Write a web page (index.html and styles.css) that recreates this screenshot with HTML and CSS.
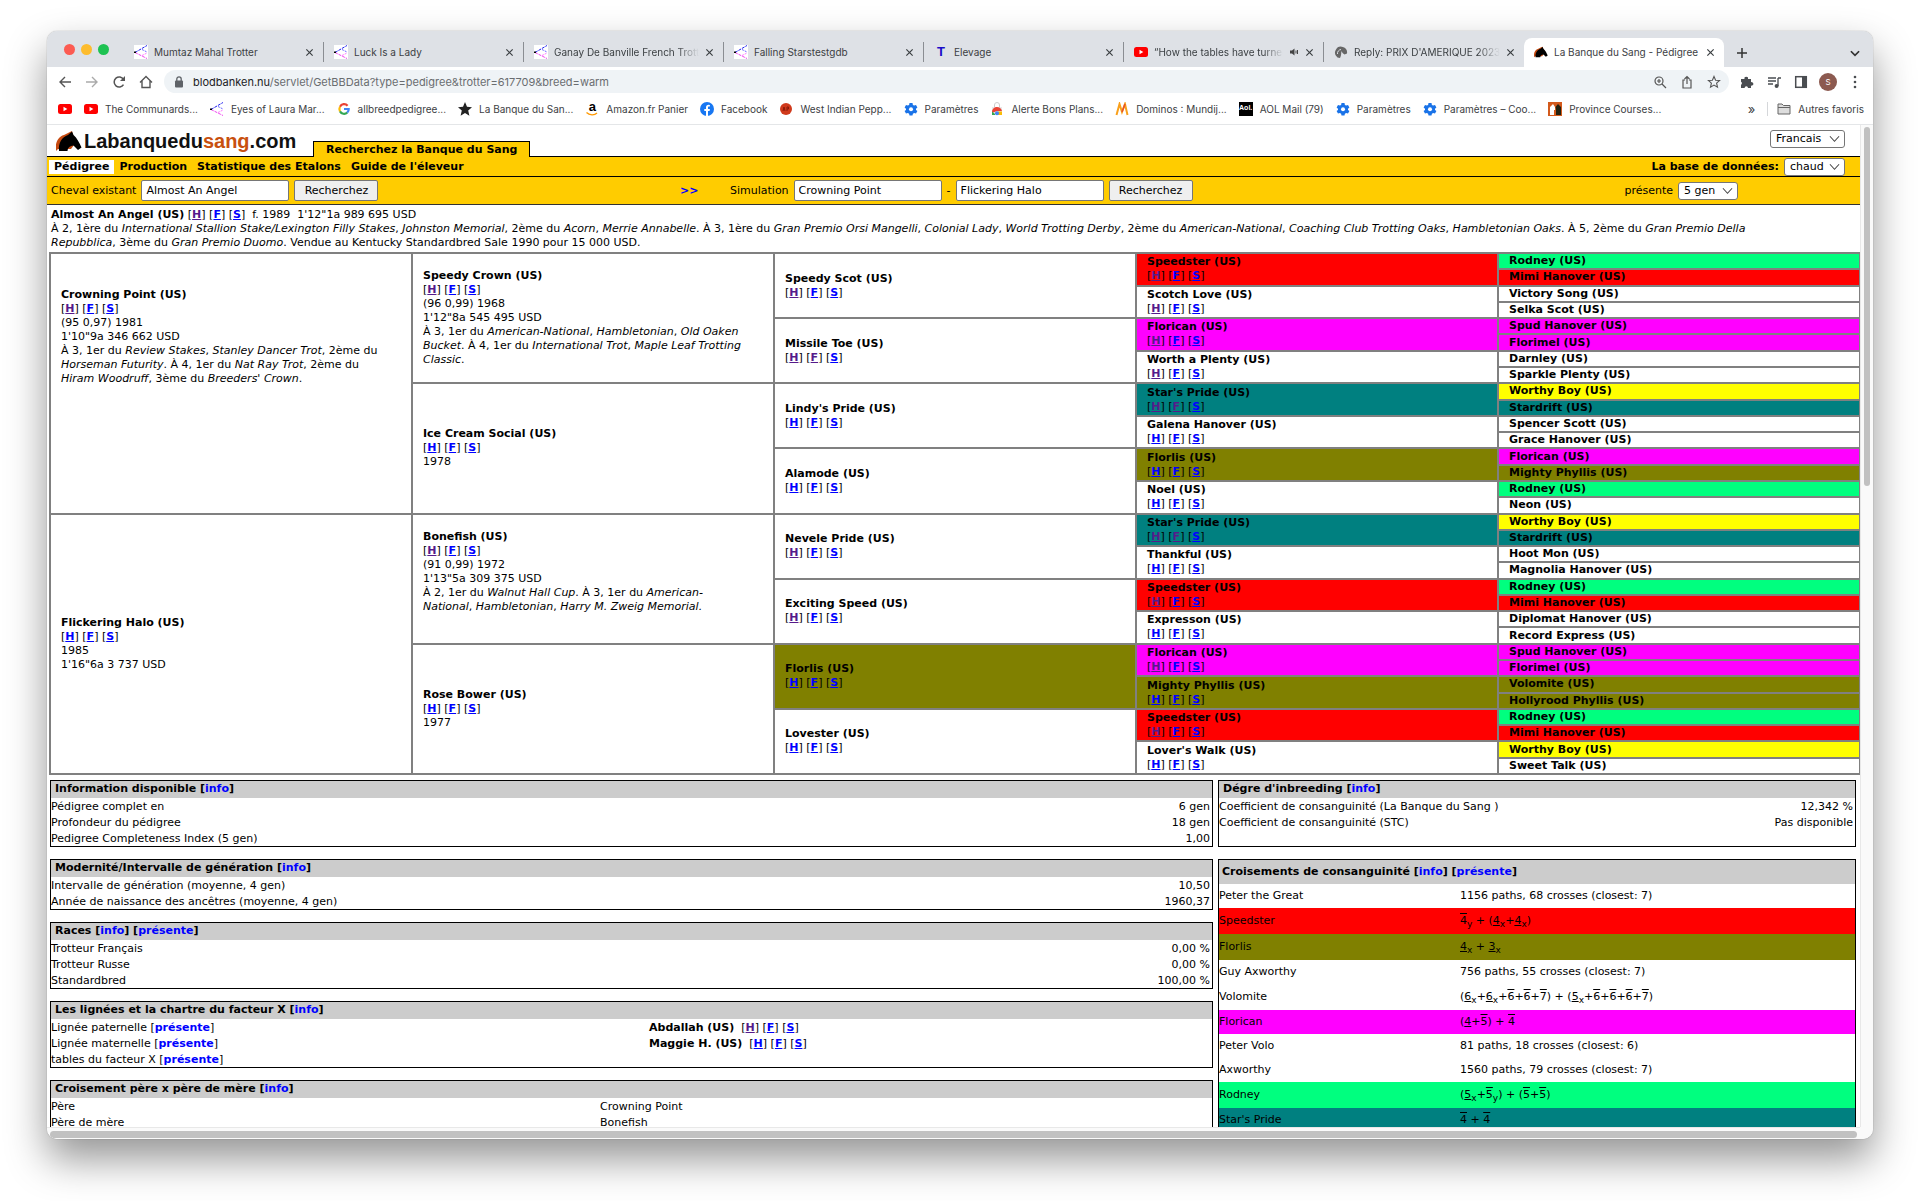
FILE: index.html
```html
<!DOCTYPE html>
<html lang="fr">
<head>
<meta charset="utf-8">
<title>La Banque du Sang - Pédigree</title>
<link rel="stylesheet" href="styles.css">
</head>
<body>
<svg class="symbols" aria-hidden="true">
  <symbol id="close" viewBox="0 0 10 10"><path d="M1.5 1.5l7 7M8.5 1.5l-7 7" stroke="#3c4043" stroke-width="1.3" fill="none"/></symbol>
  <symbol id="tree" viewBox="0 0 14 14"><path d="M1 7.500L13 .5" stroke="#22e" fill="none" stroke-dasharray="3 1"/><path d="M1 7.500l12 6" stroke="#e4e" fill="none" stroke-dasharray="3 1"/><path d="M8 4.500l5 2.500" stroke="#66f" fill="none" stroke-dasharray="2 1"/><path d="M8 10.500l5-2.500" stroke="#f7f" fill="none" stroke-dasharray="2 1"/><path d="M0 6.500h2v1.500H0z" fill="#000"/></symbol>
  <symbol id="youtube" viewBox="0 0 14 14"><rect y="2" width="14" height="10" rx="2.500" fill="#f00"/><path d="M5.500 4.800v4.400L9.300 7z" fill="#fff"/></symbol>
  <symbol id="horse" viewBox="0 0 26 20"><path d="M0 20C-1 13 1 6 8 4L16 0l1 4 4 6-6 8H2z" fill="#c64a10"/><path d="M3 20C2 12 6 6 12 4l4-3.500L17.500 4C21 7 23.500 12 25.500 16.500L22 19l-4.500-4.500C14 15 12 16 11.500 20z" fill="#000"/></symbol>
  <symbol id="gear" viewBox="0 0 14 14"><path d="M5.500 1h3l.4 1.900 1.200.7 1.900-.7 1.400 2.500-1.400 1.300v1.200l1.400 1.200-1.400 2.500-1.900-.6-1.200.7-.4 1.800h-3l-.4-1.800-1.200-.7-1.900.6-1.400-2.500L2 7.900V6.700L.6 5.400 2 2.900l1.900.7 1.200-.7z" fill="#1a73e8"/><circle cx="7" cy="7.300" r="2" fill="#fff"/></symbol>
  <symbol id="chevron" viewBox="0 0 12 8"><path d="M1 1l5 5.500L11 1" stroke="#444" stroke-width="1.100" fill="none"/></symbol>
</svg>

<div class="window">
  <div class="tabstrip">
    <div class="lights"><i class="light light-red"></i><i class="light light-amber"></i><i class="light light-green"></i></div>
    <div class="tabs">
      <div class="tab"><svg class="ico white"><use href="#tree"/></svg><span class="tab-name">Mumtaz Mahal Trotter</span><svg class="x"><use href="#close"/></svg></div>
      <div class="tab"><svg class="ico white"><use href="#tree"/></svg><span class="tab-name">Luck Is a Lady</span><svg class="x"><use href="#close"/></svg></div>
      <div class="tab"><svg class="ico white"><use href="#tree"/></svg><span class="tab-name fade">Ganay De Banville French Trotter</span><svg class="x"><use href="#close"/></svg></div>
      <div class="tab"><svg class="ico white"><use href="#tree"/></svg><span class="tab-name">Falling Starstestgdb</span><svg class="x"><use href="#close"/></svg></div>
      <div class="tab"><b class="ico letter">T</b><span class="tab-name">Elevage</span><svg class="x"><use href="#close"/></svg></div>
      <div class="tab"><svg class="ico"><use href="#youtube"/></svg><span class="tab-name fade">“How the tables have turned”</span><svg class="speaker" viewBox="0 0 10 10"><path d="M1 3.500h2L5.500 1.500v7L3 6.500H1z" fill="#444"/><path d="M7 3.500v3M8.500 3v4" stroke="#444" fill="none"/></svg><svg class="x"><use href="#close"/></svg></div>
      <div class="tab last"><svg class="ico" viewBox="0 0 14 14"><path d="M3.500 12.500A6 6 0 1 1 13 8.500l-2.500 1C9 8.500 8 7.500 7.500 6c-.5 2 0 4-1.500 7z" fill="#666"/><path d="M3.500 9A4 4 0 0 1 7 4.500" stroke="#dee1e6" fill="none"/></svg><span class="tab-name fade">Reply: PRIX D'AMERIQUE 2023</span><svg class="x"><use href="#close"/></svg></div>
      <div class="tab active"><svg class="ico" viewBox="0 0 26 20"><use href="#horse"/></svg><span class="tab-name">La Banque du Sang - Pédigree</span><svg class="x"><use href="#close"/></svg></div>
      <button class="icon-btn new-tab" aria-label="Nouvel onglet"><svg viewBox="0 0 12 12"><path d="M6 1v10M1 6h10" stroke="#333" stroke-width="1.500"/></svg></button>
    </div>
    <button class="icon-btn tab-list" aria-label="Onglets"><svg viewBox="0 0 12 12"><path d="M2.500 4.500L6 8l3.500-3.500" stroke="#333" stroke-width="1.500" fill="none"/></svg></button>
  </div>

  <div class="toolbar">
    <button class="icon-btn" aria-label="Retour"><svg viewBox="0 0 14 14"><path d="M13 7H2M7 2L2 7l5 5" stroke="#555" stroke-width="1.400" fill="none"/></svg></button>
    <button class="icon-btn" aria-label="Suivant"><svg viewBox="0 0 14 14"><path d="M1 7h11M7 2l5 5-5 5" stroke="#aaa" stroke-width="1.400" fill="none"/></svg></button>
    <button class="icon-btn" aria-label="Actualiser"><svg viewBox="0 0 14 14"><path d="M11.500 9.500a5 5 0 1 1 0-5" stroke="#555" stroke-width="1.500" fill="none"/><path d="M13 1v5H8z" fill="#555"/></svg></button>
    <button class="icon-btn" aria-label="Accueil"><svg viewBox="0 0 14 14"><path d="M1 7.500L7 1.500l6 6M3 6v6.500h8V6" stroke="#555" stroke-width="1.400" fill="none"/></svg></button>
    <div class="address">
      <svg class="lock" viewBox="0 0 14 14"><rect x="3" y="5.500" width="8" height="7" rx="1" fill="#5f6368"/><path d="M4.800 6V4a2.200 2.200 0 0 1 4.400 0v2" stroke="#5f6368" stroke-width="1.300" fill="none"/></svg>
      <span class="url"><b>blodbanken.nu</b>/servlet/GetBBData?type=pedigree&amp;trotter=617709&amp;breed=warm</span>
      <button class="icon-btn" aria-label="Zoom"><svg viewBox="0 0 14 14"><circle cx="6" cy="6" r="4" stroke="#555" stroke-width="1.200" fill="none"/><path d="M9 9l4 4M6 4v4M4 6h4" stroke="#555" stroke-width="1.200"/></svg></button>
      <button class="icon-btn" aria-label="Partager"><svg viewBox="0 0 14 14"><path d="M5 5H3v8h8V5H9M7 9V1.500M4.500 4L7 1.500 9.500 4" stroke="#555" stroke-width="1.200" fill="none"/></svg></button>
      <button class="icon-btn" aria-label="Favori"><svg viewBox="0 0 14 14"><path d="M7 1.500l1.600 3.700 4 .3-3 2.700.9 4L7 10.100l-3.500 2.100.9-4-3-2.700 4-.3z" stroke="#555" stroke-width="1.100" fill="none"/></svg></button>
    </div>
    <div class="tools">
      <button class="icon-btn" aria-label="Extensions"><svg viewBox="0 0 14 14"><path d="M1 4h3.500a1.800 1.800 0 1 1 3.500 0h3v3.200a1.800 1.800 0 1 1 0 3.400V13H8a1.700 1.700 0 0 0-3.400 0H1V9.700a1.700 1.700 0 0 0 0-3z" fill="#4a4d51"/></svg></button>
      <button class="icon-btn" aria-label="Médias"><svg viewBox="0 0 14 14"><path d="M1 3h8M1 6h8M1 9h5M11 3v8M11 3h3" stroke="#4a4d51" stroke-width="1.300"/><circle cx="9.600" cy="11" r="2" fill="#4a4d51"/></svg></button>
      <button class="icon-btn" aria-label="Panneau"><svg viewBox="0 0 14 14"><rect x="1.700" y="1.700" width="10.600" height="10.600" stroke="#4a4d51" stroke-width="1.500" fill="none"/><path d="M8 1h5v12H8z" fill="#4a4d51"/></svg></button>
      <button class="icon-btn avatar" aria-label="Profil">S</button>
      <button class="icon-btn" aria-label="Menu"><svg viewBox="0 0 14 14"><circle cx="7" cy="2" r="1.300" fill="#4a4d51"/><circle cx="7" cy="7" r="1.300" fill="#4a4d51"/><circle cx="7" cy="12" r="1.300" fill="#4a4d51"/></svg></button>
    </div>
  </div>

  <nav class="bookmarks">
    <a href="#"><svg class="ico"><use href="#youtube"/></svg></a>
    <a href="#"><svg class="ico"><use href="#youtube"/></svg>The Communards...</a>
    <a href="#"><svg class="ico"><use href="#tree"/></svg>Eyes of Laura Mar...</a>
    <a href="#"><svg class="ico" viewBox="0 0 14 14"><g fill="none" stroke-width="2.200"><path d="M10.600 3.700A4.600 4.600 0 0 0 3 4.700" stroke="#ea4335"/><path d="M3 4.700a4.800 4.800 0 0 0 0 4.700" stroke="#fbbc05"/><path d="M3 9.400a4.700 4.700 0 0 0 7.200 1.200" stroke="#34a853"/><path d="M10.200 10.600A4.500 4.500 0 0 0 11.700 7H7" stroke="#4285f4"/></g></svg>allbreedpedigree...</a>
    <a href="#"><svg class="ico" viewBox="0 0 14 14"><path d="M7 0l2 4.800 5 .4-3.800 3.400 1.200 5.200L7 11l-4.400 2.800 1.200-5.200L0 5.200l5-.4z" fill="#222"/></svg>La Banque du San...</a>
    <a href="#"><span class="ico amazon"><b>a</b><svg viewBox="0 0 14 4"><path d="M1.500 .5c3 3 8 3 10.500 .5" stroke="#f90" stroke-width="1.300" fill="none"/></svg></span>Amazon.fr Panier</a>
    <a href="#"><svg class="ico" viewBox="0 0 14 14"><circle cx="7" cy="7" r="7" fill="#1877f2"/><path d="M6 14V9H4.300V7H6V5.500C6 3.700 7 2.800 8.600 2.800l1.300.1v1.700H9c-.8 0-1 .4-1 1V7h1.900l-.3 2H8v5z" fill="#fff"/></svg>Facebook</a>
    <a href="#"><svg class="ico" viewBox="0 0 14 14"><circle cx="7" cy="7" r="6" fill="#d03a1c"/><path d="M4 9l1-4 1 4M8 9V5h1.500v2H8" stroke="#8a1a0a" fill="none"/></svg>West Indian Pepp...</a>
    <a href="#"><svg class="ico"><use href="#gear"/></svg>Paramètres</a>
    <a href="#"><svg class="ico" viewBox="0 0 14 14"><path d="M2 5h10v8H2z" fill="#e8e8e8"/><path d="M4.500 5V3a2.500 2.500 0 0 1 5 0v2" stroke="#ccc" fill="none"/><path d="M2 11a5 5 0 0 1 10-2H7z" fill="#ea4335"/><path d="M2 13V9.500L5 12v1z" fill="#34a853"/><path d="M12 13V9.500H8V13z" fill="#fbbc05"/><circle cx="7" cy="11.300" r="2" fill="#4285f4"/></svg>Alerte Bons Plans...</a>
    <a href="#"><svg class="ico" viewBox="0 0 14 14"><path d="M1.500 13L4.500 2 7 10l3-8 2.500 11" stroke="#f9a01b" stroke-width="2" fill="none"/><path d="M7 10l3-8" stroke="#e8502a" stroke-width="1.600"/></svg>Dominos : Mundij...</a>
    <a href="#"><span class="ico aol">Aol.</span>AOL Mail (79)</a>
    <a href="#"><svg class="ico"><use href="#gear"/></svg>Paramètres</a>
    <a href="#"><svg class="ico"><use href="#gear"/></svg>Paramètres – Coo...</a>
    <a href="#"><svg class="ico" viewBox="0 0 14 14"><path d="M0 0h14v14H0z" fill="#d35a1c"/><path d="M2 13V5l3-3 2 3v3H6v5z" fill="#fff"/><path d="M8 13V7L7.500 5 10 2l3 3v8z" fill="#221"/></svg>Province Courses...</a>
    <span class="more">»</span>
    <a href="#" class="others"><svg class="ico" viewBox="0 0 14 14"><path d="M1 2h4l1.500 1.500H13V12H1z" fill="#ddd" stroke="#666"/><path d="M1 5.500h12" stroke="#666"/></svg>Autres favoris</a>
  </nav>

  <div class="viewport">
    <div class="page">
      <header class="site-head">
        <a class="logo" href="#"><svg class="logo-horse" viewBox="0 0 26 20"><use href="#horse"/></svg><span>Labanquedu<em>sang</em>.com</span></a>
        <span class="site-tab">Recherchez la Banque du Sang</span>
        <span class="select lang"><select aria-label="Langue"><option>Francais</option></select><svg><use href="#chevron"/></svg></span>
      </header>
      <nav class="site-nav">
        <a class="current" href="#">Pédigree</a><a href="#">Production</a><a href="#">Statistique des Etalons</a><a href="#">Guide de l'éleveur</a>
        <label class="db" for="db">La base de données:</label>
        <span class="select db-select"><select id="db"><option>chaud</option></select><svg><use href="#chevron"/></svg></span>
      </nav>
      <form class="search">
        <div class="group existing"><label for="horse-name">Cheval existant</label><input id="horse-name" type="text" value="Almost An Angel"><button type="button">Recherchez</button></div>
        <a class="swap" href="#">&gt;&gt;</a>
        <div class="group"><label for="sire">Simulation</label><input id="sire" type="text" value="Crowning Point"><span>-</span><input type="text" aria-label="Mère" value="Flickering Halo"><button type="button">Recherchez</button></div>
        <div class="group gens"><label for="gens">présente</label><span class="select gen-select"><select id="gens"><option>5 gen</option></select><svg><use href="#chevron"/></svg></span></div>
      </form>

      <section class="intro">
        <p><b>Almost An Angel (US)</b> <span class="hfs">[<a class="seen" href="#">H</a>] [<a href="#">F</a>] [<a href="#">S</a>]</span>&nbsp; f. 1989 &nbsp;1'12"1a 989 695 USD</p>
        <p>À 2, 1ère du <i>International Stallion Stake/Lexington Filly Stakes</i>, <i>Johnston Memorial</i>, 2ème du <i>Acorn</i>, <i>Merrie Annabelle</i>. À 3, 1ère du <i>Gran Premio Orsi Mangelli</i>, <i>Colonial Lady</i>, <i>World Trotting Derby</i>, 2ème du <i>American-National</i>, <i>Coaching Club Trotting Oaks</i>, <i>Hambletonian Oaks</i>. À 5, 2ème du <i>Gran Premio Della Repubblica</i>, 3ème du <i>Gran Premio Duomo</i>. Vendue au Kentucky Standardbred Sale 1990 pour 15 000 USD.</p>
      </section>

      <table class="pedigree">
        <tr>
          <td rowspan="16" class="sire"><b>Crowning Point (US)</b><span class="hfs">[<a class="seen" href="#">H</a>] [<a href="#">F</a>] [<a href="#">S</a>]</span>(95 0,97) 1981<br>1'10"9a 346 662 USD<br>À 3, 1er du <i>Review Stakes</i>, <i>Stanley Dancer Trot</i>, 2ème du <i>Horseman Futurity</i>. À 4, 1er du <i>Nat Ray Trot</i>, 2ème du <i>Hiram Woodruff</i>, 3ème du <i>Breeders' Crown</i>.</td>
          <td rowspan="8"><b>Speedy Crown (US)</b><span class="hfs">[<a class="seen" href="#">H</a>] [<a href="#">F</a>] [<a href="#">S</a>]</span>(96 0,99) 1968<br>1'12"8a 545 495 USD<br>À 3, 1er du <i>American-National</i>, <i>Hambletonian</i>, <i>Old Oaken Bucket</i>. À 4, 1er du <i>International Trot</i>, <i>Maple Leaf Trotting Classic</i>.</td>
          <td rowspan="4"><b>Speedy Scot (US)</b><span class="hfs">[<a class="seen" href="#">H</a>] [<a href="#">F</a>] [<a href="#">S</a>]</span></td>
          <td rowspan="2" class="red"><b>Speedster (US)</b><span class="hfs">[<a class="seen" href="#">H</a>] [<a href="#">F</a>] [<a href="#">S</a>]</span></td>
          <td class="green"><b>Rodney (US)</b></td>
        </tr>
        <tr><td class="red"><b>Mimi Hanover (US)</b></td></tr>
        <tr><td rowspan="2"><b>Scotch Love (US)</b><span class="hfs">[<a class="seen" href="#">H</a>] [<a href="#">F</a>] [<a href="#">S</a>]</span></td><td><b>Victory Song (US)</b></td></tr>
        <tr><td><b>Selka Scot (US)</b></td></tr>
        <tr><td rowspan="4"><b>Missile Toe (US)</b><span class="hfs">[<a class="seen" href="#">H</a>] [<a class="seen" href="#">F</a>] [<a href="#">S</a>]</span></td><td rowspan="2" class="magenta"><b>Florican (US)</b><span class="hfs">[<a class="seen" href="#">H</a>] [<a href="#">F</a>] [<a href="#">S</a>]</span></td><td class="magenta"><b>Spud Hanover (US)</b></td></tr>
        <tr><td class="magenta"><b>Florimel (US)</b></td></tr>
        <tr><td rowspan="2"><b>Worth a Plenty (US)</b><span class="hfs">[<a class="seen" href="#">H</a>] [<a href="#">F</a>] [<a href="#">S</a>]</span></td><td><b>Darnley (US)</b></td></tr>
        <tr><td><b>Sparkle Plenty (US)</b></td></tr>
        <tr><td rowspan="8"><b>Ice Cream Social (US)</b><span class="hfs">[<a href="#">H</a>] [<a href="#">F</a>] [<a href="#">S</a>]</span>1978</td><td rowspan="4"><b>Lindy's Pride (US)</b><span class="hfs">[<a href="#">H</a>] [<a href="#">F</a>] [<a href="#">S</a>]</span></td><td rowspan="2" class="teal"><b>Star's Pride (US)</b><span class="hfs">[<a class="seen" href="#">H</a>] [<a class="seen" href="#">F</a>] [<a href="#">S</a>]</span></td><td class="yellow"><b>Worthy Boy (US)</b></td></tr>
        <tr><td class="teal"><b>Stardrift (US)</b></td></tr>
        <tr><td rowspan="2"><b>Galena Hanover (US)</b><span class="hfs">[<a href="#">H</a>] [<a href="#">F</a>] [<a href="#">S</a>]</span></td><td><b>Spencer Scott (US)</b></td></tr>
        <tr><td><b>Grace Hanover (US)</b></td></tr>
        <tr><td rowspan="4"><b>Alamode (US)</b><span class="hfs">[<a href="#">H</a>] [<a href="#">F</a>] [<a href="#">S</a>]</span></td><td rowspan="2" class="olive"><b>Florlis (US)</b><span class="hfs">[<a href="#">H</a>] [<a href="#">F</a>] [<a href="#">S</a>]</span></td><td class="magenta"><b>Florican (US)</b></td></tr>
        <tr><td class="olive"><b>Mighty Phyllis (US)</b></td></tr>
        <tr><td rowspan="2"><b>Noel (US)</b><span class="hfs">[<a href="#">H</a>] [<a href="#">F</a>] [<a href="#">S</a>]</span></td><td class="green"><b>Rodney (US)</b></td></tr>
        <tr><td><b>Neon (US)</b></td></tr>
        <tr>
          <td rowspan="16"><b>Flickering Halo (US)</b><span class="hfs">[<a href="#">H</a>] [<a href="#">F</a>] [<a href="#">S</a>]</span>1985<br>1'16"6a 3 737 USD</td>
          <td rowspan="8"><b>Bonefish (US)</b><span class="hfs">[<a class="seen" href="#">H</a>] [<a href="#">F</a>] [<a href="#">S</a>]</span>(91 0,99) 1972<br>1'13"5a 309 375 USD<br>À 2, 1er du <i>Walnut Hall Cup</i>. À 3, 1er du <i>American-<br>National</i>, <i>Hambletonian</i>, <i>Harry M. Zweig Memorial.</i><br>&nbsp;</td>
          <td rowspan="4"><b>Nevele Pride (US)</b><span class="hfs">[<a class="seen" href="#">H</a>] [<a href="#">F</a>] [<a href="#">S</a>]</span></td>
          <td rowspan="2" class="teal"><b>Star's Pride (US)</b><span class="hfs">[<a class="seen" href="#">H</a>] [<a class="seen" href="#">F</a>] [<a href="#">S</a>]</span></td>
          <td class="yellow"><b>Worthy Boy (US)</b></td>
        </tr>
        <tr><td class="teal"><b>Stardrift (US)</b></td></tr>
        <tr><td rowspan="2"><b>Thankful (US)</b><span class="hfs">[<a href="#">H</a>] [<a href="#">F</a>] [<a href="#">S</a>]</span></td><td><b>Hoot Mon (US)</b></td></tr>
        <tr><td><b>Magnolia Hanover (US)</b></td></tr>
        <tr><td rowspan="4"><b>Exciting Speed (US)</b><span class="hfs">[<a class="seen" href="#">H</a>] [<a href="#">F</a>] [<a href="#">S</a>]</span></td><td rowspan="2" class="red"><b>Speedster (US)</b><span class="hfs">[<a class="seen" href="#">H</a>] [<a href="#">F</a>] [<a href="#">S</a>]</span></td><td class="green"><b>Rodney (US)</b></td></tr>
        <tr><td class="red"><b>Mimi Hanover (US)</b></td></tr>
        <tr><td rowspan="2"><b>Expresson (US)</b><span class="hfs">[<a href="#">H</a>] [<a href="#">F</a>] [<a href="#">S</a>]</span></td><td><b>Diplomat Hanover (US)</b></td></tr>
        <tr><td><b>Record Express (US)</b></td></tr>
        <tr><td rowspan="8"><b>Rose Bower (US)</b><span class="hfs">[<a href="#">H</a>] [<a href="#">F</a>] [<a href="#">S</a>]</span>1977</td><td rowspan="4" class="olive"><b>Florlis (US)</b><span class="hfs">[<a href="#">H</a>] [<a href="#">F</a>] [<a href="#">S</a>]</span></td><td rowspan="2" class="magenta"><b>Florican (US)</b><span class="hfs">[<a class="seen" href="#">H</a>] [<a href="#">F</a>] [<a href="#">S</a>]</span></td><td class="magenta"><b>Spud Hanover (US)</b></td></tr>
        <tr><td class="magenta"><b>Florimel (US)</b></td></tr>
        <tr><td rowspan="2" class="olive"><b>Mighty Phyllis (US)</b><span class="hfs">[<a href="#">H</a>] [<a href="#">F</a>] [<a href="#">S</a>]</span></td><td class="olive"><b>Volomite (US)</b></td></tr>
        <tr><td class="olive"><b>Hollyrood Phyllis (US)</b></td></tr>
        <tr><td rowspan="4"><b>Lovester (US)</b><span class="hfs">[<a href="#">H</a>] [<a href="#">F</a>] [<a href="#">S</a>]</span></td><td rowspan="2" class="red"><b>Speedster (US)</b><span class="hfs">[<a class="seen" href="#">H</a>] [<a href="#">F</a>] [<a href="#">S</a>]</span></td><td class="green"><b>Rodney (US)</b></td></tr>
        <tr><td class="red"><b>Mimi Hanover (US)</b></td></tr>
        <tr><td rowspan="2"><b>Lover's Walk (US)</b><span class="hfs">[<a href="#">H</a>] [<a href="#">F</a>] [<a href="#">S</a>]</span></td><td class="yellow"><b>Worthy Boy (US)</b></td></tr>
        <tr><td><b>Sweet Talk (US)</b></td></tr>
      </table>

      <div class="panels">
        <div class="col">
          <section class="box">
            <h2>Information disponible [<a href="#">info</a>]</h2>
            <table>
              <tr><td>Pédigree complet en</td><td class="num">6 gen</td></tr>
              <tr><td>Profondeur du pédigree</td><td class="num">18 gen</td></tr>
              <tr><td>Pedigree Completeness Index (5 gen)</td><td class="num">1,00</td></tr>
            </table>
          </section>
          <section class="box">
            <h2>Modernité/Intervalle de génération [<a href="#">info</a>]</h2>
            <table>
              <tr><td>Intervalle de génération (moyenne, 4 gen)</td><td class="num">10,50</td></tr>
              <tr><td>Année de naissance des ancêtres (moyenne, 4 gen)</td><td class="num">1960,37</td></tr>
            </table>
          </section>
          <section class="box">
            <h2>Races [<a href="#">info</a>] [<a href="#">présente</a>]</h2>
            <table>
              <tr><td>Trotteur Français</td><td class="num">0,00 %</td></tr>
              <tr><td>Trotteur Russe</td><td class="num">0,00 %</td></tr>
              <tr><td>Standardbred</td><td class="num">100,00 %</td></tr>
            </table>
          </section>
          <section class="box">
            <h2>Les lignées et la chartre du facteur X [<a href="#">info</a>]</h2>
            <table class="lines">
              <tr><td>Lignée paternelle [<a href="#">présente</a>]</td><td><b>Abdallah (US)</b>&nbsp; <span class="hfs">[<a class="seen" href="#">H</a>] [<a href="#">F</a>] [<a href="#">S</a>]</span></td></tr>
              <tr><td>Lignée maternelle [<a href="#">présente</a>]</td><td><b>Maggie H. (US)</b>&nbsp; <span class="hfs">[<a href="#">H</a>] [<a href="#">F</a>] [<a href="#">S</a>]</span></td></tr>
              <tr><td>tables du facteur X [<a href="#">présente</a>]</td><td></td></tr>
            </table>
          </section>
          <section class="box">
            <h2>Croisement père x père de mère [<a href="#">info</a>]</h2>
            <table class="cross">
              <tr><td>Père</td><td>Crowning Point</td></tr>
              <tr><td>Père de mère</td><td>Bonefish</td></tr>
              <tr><td></td><td></td></tr>
            </table>
          </section>
        </div>
        <div class="col side">
          <section class="box degree">
            <h2>Dégre d'inbreeding [<a href="#">info</a>]</h2>
            <table>
              <tr><td>Coefficient de consanguinité (La Banque du Sang )</td><td class="num">12,342 %</td></tr>
              <tr><td>Coefficient de consanguinité (STC)</td><td class="num">Pas disponible</td></tr>
            </table>
          </section>
          <section class="box inbreeding">
            <h2>Croisements de consanguinité [<a href="#">info</a>] [<a href="#">présente</a>]</h2>
            <table>
              <tr><td>Peter the Great</td><td>1156 paths, 68 crosses (closest: 7)</td></tr>
              <tr class="tall red"><td>Speedster</td><td><s>4</s><sub>y</sub> + (<u>4</u><sub>x</sub>+<u>4</u><sub>x</sub>)</td></tr>
              <tr class="tall olive"><td>Florlis</td><td><u>4</u><sub>x</sub> + <u>3</u><sub>x</sub></td></tr>
              <tr><td>Guy Axworthy</td><td>756 paths, 55 crosses (closest: 7)</td></tr>
              <tr class="tall"><td>Volomite</td><td>(<u>6</u><sub>x</sub>+<u>6</u><sub>x</sub>+<s>6</s>+<s>6</s>+<s>7</s>) + (<u>5</u><sub>x</sub>+<s>6</s>+<s>6</s>+<s>6</s>+<s>7</s>)</td></tr>
              <tr class="magenta"><td>Florican</td><td>(<u>4</u>+<s>5</s>) + <s>4</s></td></tr>
              <tr><td>Peter Volo</td><td>81 paths, 18 crosses (closest: 6)</td></tr>
              <tr><td>Axworthy</td><td>1560 paths, 79 crosses (closest: 7)</td></tr>
              <tr class="tall green"><td>Rodney</td><td>(<u>5</u><sub>x</sub>+<s>5</s><sub>y</sub>) + (<s>5</s>+<s>5</s>)</td></tr>
              <tr class="teal"><td>Star's Pride</td><td><s>4</s> + <s>4</s></td></tr>
            </table>
          </section>
        </div>
      </div>
    </div>
    <div class="track-v"><div class="thumb-v"></div></div>
    <div class="track-h"><div class="thumb-h"></div></div>
  </div>
</div>
</body>
</html>
```
FILE: styles.css
```css
* { box-sizing: border-box; }
body {
  margin: 0;
  height: 100vh;
  padding: 31px 47px 62px;
  background: #fff;
  overflow: hidden;
  font: 11px/14px "DejaVu Sans", Verdana, sans-serif;
  color: #000;
}
button, input, select { font: inherit; color: inherit; margin: 0; }
a { color: #00f; }
.symbols { display: none; }

.window {
  height: 100%;
  display: flex;
  flex-direction: column;
  border-radius: 10px;
  overflow: hidden;
  background: #fff;
  box-shadow: 0 0 1px rgba(0,0,0,.5), 0 20px 40px rgba(0,0,0,.42);
}

/* browser chrome */
.tabstrip, .toolbar, .bookmarks { font-family: Inter, Roboto, sans-serif; color: #3c4043; flex: none; display: flex; align-items: center; }
.tabstrip { height: 36px; background: #dee1e6; padding: 0 11px 0 17px; }
.lights { flex: none; width: 60px; display: flex; gap: 6px; }
.light { width: 11px; height: 11px; border-radius: 50%; }
.light-red { background: #fc5b52; }
.light-amber { background: #fdbc2e; }
.light-green { background: #1ec252; }
.tabs { flex: 1; display: flex; align-items: center; font-size: 10px; }
.tab { flex: 0 1 200px; min-width: 0; height: 20px; margin-top: 6px; padding: 0 9px 0 10px; display: flex; align-items: center; gap: 6px; border-right: 1px solid #8a8d92; }
.tab-name { flex: 1; min-width: 0; overflow: hidden; white-space: nowrap; }
.fade { -webkit-mask-image: linear-gradient(90deg, #000 85%, transparent); mask-image: linear-gradient(90deg, #000 85%, transparent); }
.tab.last { border-right: 0; }
.tab.active { height: 29px; margin-top: 7px; padding-bottom: 1px; background: #fff; border: 0; border-radius: 8px 8px 0 0; }
.ico { flex: none; width: 14px; height: 14px; }
.white { background: #fff; }
.letter { color: #1a0dc8; font: bold 13px/14px "Liberation Sans", sans-serif; text-align: center; }
.x { flex: none; width: 9px; height: 9px; }
.speaker { flex: none; width: 10px; height: 10px; }
.icon-btn { flex: none; width: 14px; height: 14px; padding: 0; border: 0; background: none; }
.icon-btn svg { display: block; width: 100%; height: 100%; }
.new-tab { width: 12px; height: 12px; margin: 7px 0 0 12px; }
.tab-list { margin-top: 7px; }

.toolbar { height: 29px; padding: 0 11px; gap: 13px; }
.address { flex: 1; height: 23px; margin-left: -2px; padding: 0 8px; border-radius: 12px; background: #eff3f6; display: flex; align-items: center; gap: 13px; }
.lock { width: 14px; height: 14px; margin-right: -6px; }
.url { flex: 1; font-size: 11px; color: #6a6d70; }
.url b { font-weight: 400; color: #202124; }
.tools { display: flex; align-items: center; gap: 13px; margin-left: -2px; }
.avatar { width: 18px; height: 18px; margin: 0 -2px; border-radius: 50%; background: #8c5a50; color: #fff; font-size: 8px; line-height: 18px; text-align: center; }

.bookmarks { height: 29px; padding: 0 9px 2px 11px; gap: 12px; font-size: 10px; border-bottom: 1px solid #e4e6e8; white-space: nowrap; }
.bookmarks a { display: flex; align-items: center; gap: 7px; color: #3c4043; text-decoration: none; }
.amazon { display: grid; justify-items: center; font: bold 13px/9px "Liberation Sans", sans-serif; color: #000; }
.amazon svg { width: 14px; height: 4px; }
.aol { background: #000; color: #fff; font: bold 7px/12px "Liberation Sans", sans-serif; text-align: center; }
.more { margin-left: auto; font-size: 13px; }
.others { padding-left: 9px; border-left: 1px solid #d5d7da; }

/* scrolling area */
.viewport { flex: 1; min-height: 0; display: grid; grid-template: minmax(0, 1fr) 12px / minmax(0, 1fr) 13px; background: #fafafa; }
.page { overflow: hidden; background: #fff; }
.track-v { padding: 2px 3px; border-left: 1px solid #e8e8e8; }
.thumb-v { height: 36%; border-radius: 4px; background: #c1c1c1; }
.track-h { padding: 3px; border-top: 1px solid #e8e8e8; }
.thumb-h { height: 7px; border-radius: 4px; background: #c1c1c1; }

/* site header */
.site-head { height: 32px; padding: 0 15px 0 9px; display: flex; align-items: flex-end; border-bottom: 1px solid #000; }
.logo { display: flex; align-items: center; gap: 2px; width: 257px; height: 100%; padding-top: 1px; font: bold 20px/24px "Liberation Sans", sans-serif; color: #111; text-decoration: none; }
.logo em { font-style: normal; color: #c8500f; }
.logo-horse { width: 26px; height: 20px; }
.site-tab { height: 16px; margin-bottom: -1px; padding: 1px 12px 0; background: #fc0; border: 1px solid #000; border-bottom: 0; font-weight: 700; }
.select { display: inline-grid; align-items: center; font-weight: 400; }
.select > * { grid-area: 1 / 1; }
.select select { appearance: none; width: 100%; height: 18px; padding: 0 5px; border: 1px solid #767676; border-radius: 3px; background: #fff; line-height: 14px; }
.select svg { width: 11px; height: 8px; margin-right: 5px; justify-self: end; pointer-events: none; }
.lang { width: 75px; margin: 0 0 8px auto; }
.db-select { width: 61px; }
.gen-select { width: 60px; }
.site-nav { height: 20px; padding: 0 15px 0 2px; display: flex; align-items: center; background: #fc0; border-bottom: 1px solid #000; font-weight: 700; }
.site-nav a { padding: 0 5px; color: #000; text-decoration: none; }
.site-nav .current { background: #fff; }
.db { margin: 0 5px 0 auto; }
.search { height: 28px; padding: 0 122px 0 4px; display: flex; align-items: center; background: #fc0; border-bottom: 1px solid #333; }
.group { display: flex; align-items: center; gap: 5px; }
.existing { width: 629px; }
.group input { width: 148px; height: 21px; padding: 0 4px; border: 1px solid #767676; border-radius: 2px; background: #fff; }
.group button { width: 84px; height: 21px; padding: 0; border: 1px solid #767676; border-radius: 2px; background: #efefef; }
.swap { width: 50px; font-weight: 700; text-decoration: none; }
.gens { margin-left: auto; }

.intro { padding: 3px 48px 2px 4px; }
.intro p { margin: 0; }
.hfs a { font-weight: 700; }
a.seen { color: #551a8b; }

/* pedigree */
.pedigree { width: calc(100% - 1px); height: 523px; margin-left: 2px; table-layout: fixed; border-collapse: collapse; }
.pedigree td { padding: 0 16px 0 10px; border: 2px solid #808080; vertical-align: middle; }
.pedigree b, .pedigree .hfs { display: block; }
.pedigree .sire { padding-bottom: 92px; }
.red { background: #f00; }
.green { background: #00ff7f; }
.magenta { background: #f0f; }
.teal { background: #008080; }
.olive { background: #808000; }
.yellow { background: #ff0; }

/* information panels */
.panels { display: flex; gap: 5px; padding: 5px 4px 0 3px; }
.col { flex: 1163; min-width: 0; display: flex; flex-direction: column; gap: 12px; }
.side { flex: 638; }
.box { border: 1px solid #000; }
.box h2 { margin: 0; padding: 1px 4px 2px; background: #ccc; font-size: 11px; line-height: 14px; }
.box a { font-weight: 700; }
.box a:not(.hfs a) { text-decoration: none; }
.box table { width: 100%; border-collapse: collapse; table-layout: fixed; }
.box td { height: 16px; padding: 1px 2px 0 0; line-height: 14px; white-space: nowrap; }
.num { text-align: right; }
.lines td:first-child { width: 598px; }
.cross td:first-child { width: 549px; }
.degree { height: 67px; }
.inbreeding h2 { padding: 5px 3px; }
.inbreeding td { height: 24px; padding: 0; }
.inbreeding td:first-child { width: 241px; }
.inbreeding .tall td { height: 26px; }
.inbreeding s { text-decoration: overline; }
.inbreeding sub { font-size: 9px; line-height: 0; }
```
